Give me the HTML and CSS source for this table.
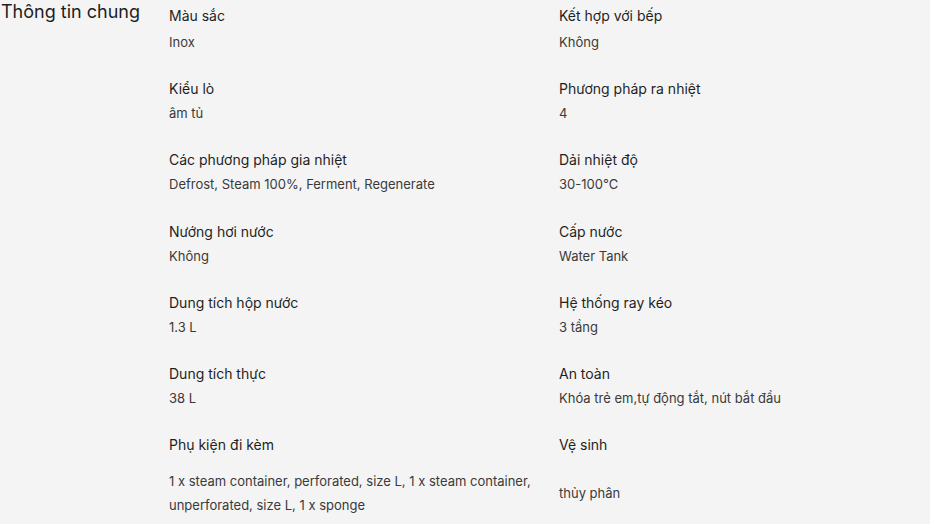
FILE: index.html
```html
<!DOCTYPE html>
<html lang="vi">
<head>
<meta charset="utf-8">
<title>Thông tin chung</title>
<link rel="stylesheet" href="styles.css">
</head>
<body>
<section class="specs">
  <h2 class="specs-title">Thông tin chung</h2>
  <div class="specs-grid">
    <div class="spec spec-first">
      <div class="spec-label">Màu sắc</div>
      <div class="spec-value">Inox</div>
    </div>
    <div class="spec spec-first">
      <div class="spec-label">Kết hợp với bếp</div>
      <div class="spec-value">Không</div>
    </div>
    <div class="spec">
      <div class="spec-label">Kiểu lò</div>
      <div class="spec-value">âm tủ</div>
    </div>
    <div class="spec">
      <div class="spec-label">Phương pháp ra nhiệt</div>
      <div class="spec-value">4</div>
    </div>
    <div class="spec">
      <div class="spec-label">Các phương pháp gia nhiệt</div>
      <div class="spec-value">Defrost, Steam 100%, Ferment, Regenerate</div>
    </div>
    <div class="spec">
      <div class="spec-label">Dải nhiệt độ</div>
      <div class="spec-value">30-100°C</div>
    </div>
    <div class="spec">
      <div class="spec-label">Nướng hơi nước</div>
      <div class="spec-value">Không</div>
    </div>
    <div class="spec">
      <div class="spec-label">Cấp nước</div>
      <div class="spec-value">Water Tank</div>
    </div>
    <div class="spec">
      <div class="spec-label">Dung tích hộp nước</div>
      <div class="spec-value">1.3 L</div>
    </div>
    <div class="spec">
      <div class="spec-label">Hệ thống ray kéo</div>
      <div class="spec-value">3 tầng</div>
    </div>
    <div class="spec">
      <div class="spec-label">Dung tích thực</div>
      <div class="spec-value">38 L</div>
    </div>
    <div class="spec">
      <div class="spec-label">An toàn</div>
      <div class="spec-value">Khóa trẻ em,tự động tắt, nút bắt đầu</div>
    </div>
    <div class="spec spec-last">
      <div class="spec-label">Phụ kiện đi kèm</div>
      <div class="spec-value">1 x steam container, perforated, size L, 1 x steam container, unperforated, size L, 1 x sponge</div>
    </div>
    <div class="spec spec-last">
      <div class="spec-label">Vệ sinh</div>
      <div class="spec-value">thủy phân</div>
    </div>
  </div>
</section>
</body>
</html>
```
FILE: styles.css
```css
html, body {
  margin: 0;
  padding: 0;
  background: #ffffff;
}

body {
  font-family: Inter, "Noto Sans", sans-serif;
}

.specs {
  width: 930px;
  min-height: 524px;
  box-sizing: border-box;
  background: #f4f4f4;
  display: flex;
  align-items: flex-start;
}

.specs-title {
  flex: 0 0 168px;
  margin: 0;
  padding-left: 1px;
  font-size: 18px;
  line-height: 24px;
  font-weight: 400;
  color: #1e1e1e;
}

.specs-grid {
  display: grid;
  grid-template-columns: 390px 370px;
  row-gap: 27.1px;
  padding-top: 6px;
}

.spec {
  display: flex;
  flex-direction: column;
}

.spec-label {
  font-size: 14px;
  line-height: 20px;
  color: #1f1f1f;
  margin-bottom: 4px;
}

.spec-first .spec-label {
  margin-bottom: 6.25px;
}

.spec-value {
  font-size: 13px;
  line-height: 20px;
  color: #3a3a3a;
}

.spec-last .spec-label {
  margin-bottom: 14.65px;
}

.spec-last .spec-value {
  flex: 1;
  display: flex;
  align-items: center;
  line-height: 24px;
  max-width: 375px;
}
```
